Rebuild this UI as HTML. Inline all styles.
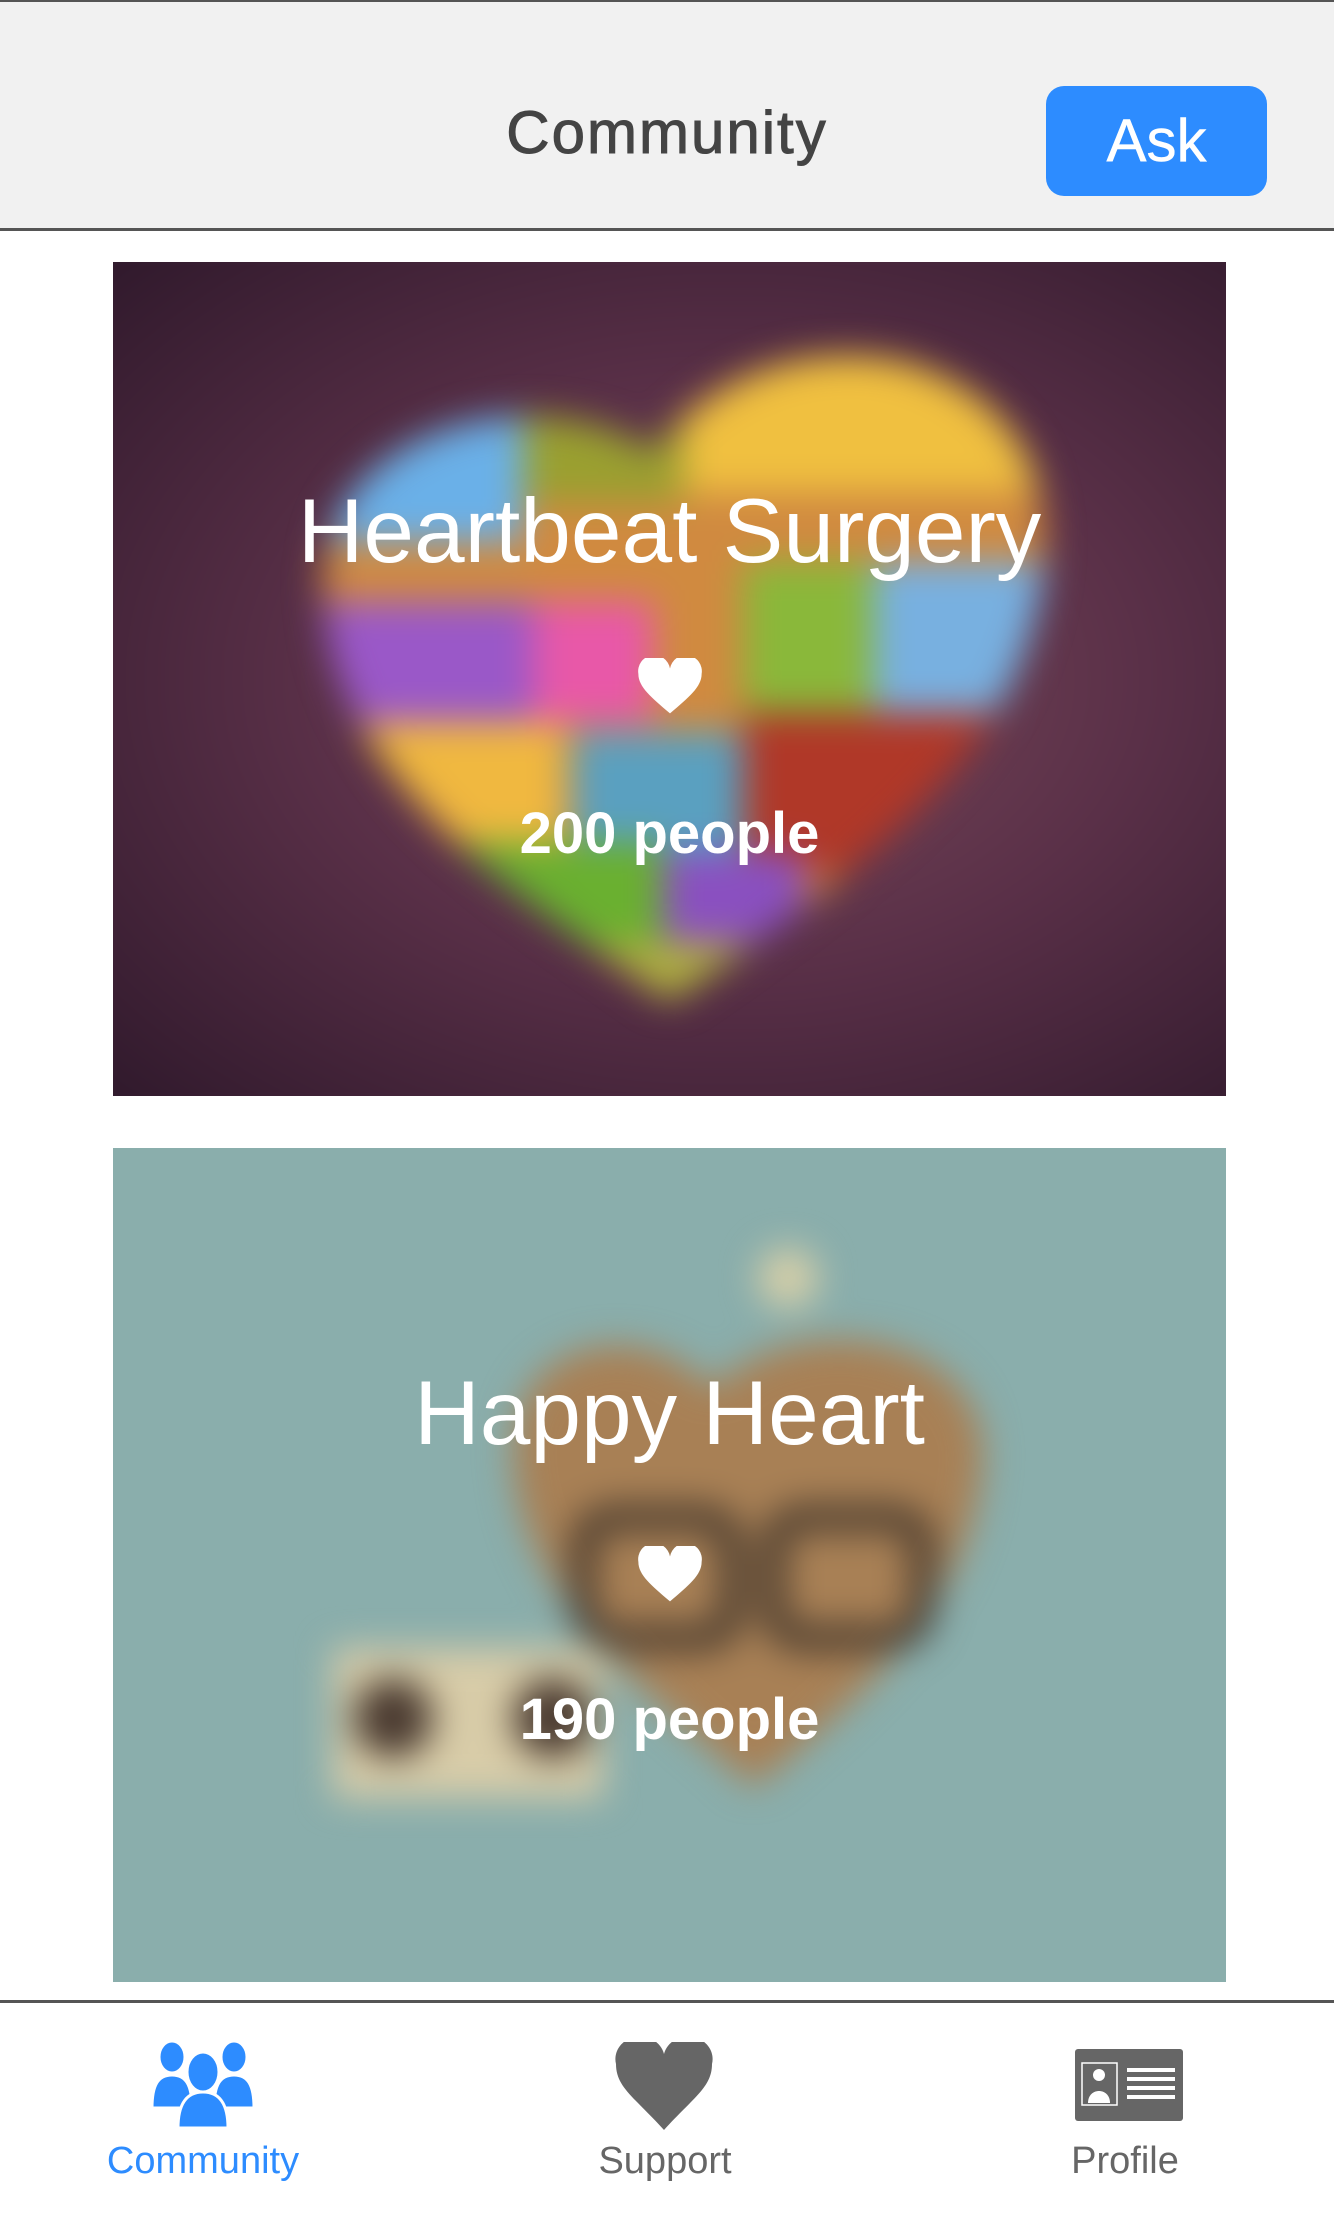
<!DOCTYPE html>
<html><head><meta charset="utf-8"><style>
*{margin:0;padding:0;box-sizing:border-box}
body{width:1334px;height:2223px;background:#fff;font-family:"Liberation Sans",sans-serif;position:relative;overflow:hidden}
.hdr{position:absolute;left:0;top:0;width:1334px;height:231px;background:#f1f1f1;border-top:2px solid #555;border-bottom:3px solid #555}
.title{position:absolute;left:0;width:1334px;top:98px;text-align:center;font-size:60px;color:#444;letter-spacing:2px;-webkit-text-stroke:1px #444}
.ask{position:absolute;left:1046px;top:86px;width:221px;height:110px;background:#2d8cff;border-radius:18px;color:#fff;font-size:60px;text-align:center;line-height:110px;-webkit-text-stroke:0.5px #fff}
.card{position:absolute;left:113px;width:1113px;height:834px;overflow:hidden}
.bg{position:absolute;inset:-40px;filter:blur(18px)}
.ct{position:absolute;left:0;width:100%;text-align:center;color:#fff}
.big{font-size:91px}
.ppl{font-size:58px;font-weight:bold}
.tab{position:absolute;top:2000px;left:0;width:1334px;height:223px;border-top:3px solid #555;background:#fff}
.lbl{position:absolute;top:2140px;font-size:38px;color:#666;text-align:center;width:300px}
</style></head><body>
<div class="hdr"></div>
<div class="title">Community</div>
<div class="ask">Ask</div>

<div class="card" style="top:262px">
 <div class="bg" style="background:radial-gradient(ellipse at 55% 50%,#7a4a5a 0%,#5a3048 45%,#2a1628 100%)"></div>
 <svg class="bg" viewBox="0 0 1113 834" style="inset:0;width:1113px;height:834px" preserveAspectRatio="none">
  <defs><clipPath id="h"><path d="M556 740 C420 640 210 520 210 320 C210 170 420 110 540 190 C600 110 700 80 790 100 C930 140 950 260 920 360 C880 520 700 640 556 740Z"/></clipPath></defs>
  <g clip-path="url(#h)">
  <rect width="1113" height="834" fill="#d08a40"/>
  <rect x="200" y="80" width="210" height="200" fill="#6ab0e8"/>
  <rect x="410" y="80" width="160" height="160" fill="#9aa030"/>
  <rect x="570" y="80" width="360" height="150" fill="#f0c040"/>
  <rect x="200" y="340" width="220" height="130" fill="#9a58c8"/>
  <rect x="420" y="340" width="120" height="120" fill="#e858a8"/>
  <rect x="630" y="300" width="130" height="160" fill="#8ab83a"/>
  <rect x="760" y="300" width="180" height="170" fill="#78b0e0"/>
  <rect x="200" y="460" width="250" height="120" fill="#f0b840"/>
  <rect x="460" y="470" width="170" height="130" fill="#5aa0c0"/>
  <rect x="630" y="450" width="260" height="160" fill="#b03828"/>
  <rect x="300" y="580" width="250" height="120" fill="#6ab030"/>
  <rect x="550" y="590" width="140" height="110" fill="#8a50c0"/>
  <rect x="400" y="680" width="240" height="80" fill="#b0b040"/>
  </g>
 </svg>
 <div class="ct big" style="top:218px">Heartbeat Surgery</div>
 <div class="ct" style="top:396px"><svg width="64" height="58" viewBox="0 0 24 22"><path d="M12 21 C5 15 0 11 0 6 A6 6 0 0 1 12 4 A6 6 0 0 1 24 6 C24 11 19 15 12 21Z" fill="#fff"/></svg></div>
 <div class="ct ppl" style="top:538px">200 people</div>
</div>

<div class="card" style="top:1148px;background:#8aaeac">
 <svg class="bg" viewBox="0 0 1113 834" style="inset:0;width:1113px;height:834px" preserveAspectRatio="none">
  <path d="M640 640 C560 560 400 460 400 300 C400 200 520 160 600 240 C680 160 860 180 870 300 C870 440 760 540 640 640Z" fill="#a88055"/>
  <rect x="470" y="370" width="150" height="120" rx="30" fill="none" stroke="#3a3028" stroke-width="22"/>
  <rect x="660" y="370" width="150" height="120" rx="30" fill="none" stroke="#3a3028" stroke-width="22"/>
  <rect x="220" y="500" width="270" height="150" fill="#d8cca8"/>
  <circle cx="280" cy="570" r="40" fill="#4a3a30"/><circle cx="440" cy="570" r="40" fill="#4a3a30"/>
  <circle cx="675" cy="130" r="30" fill="#d8d0a8"/>
 </svg>
 <div class="ct big" style="top:214px">Happy Heart</div>
 <div class="ct" style="top:398px"><svg width="64" height="58" viewBox="0 0 24 22"><path d="M12 21 C5 15 0 11 0 6 A6 6 0 0 1 12 4 A6 6 0 0 1 24 6 C24 11 19 15 12 21Z" fill="#fff"/></svg></div>
 <div class="ct ppl" style="top:538px">190 people</div>
</div>

<div class="tab"></div>
<svg style="position:absolute;left:150px;top:2040px" width="106" height="90" viewBox="0 0 106 90">
 <g fill="#2d8cff" stroke="#fff" stroke-width="3">
  <ellipse cx="22" cy="17" rx="13" ry="16"/><path d="M2 68 C2 45 8 35 22 35 C36 35 42 45 42 68Z"/>
  <ellipse cx="84" cy="17" rx="13" ry="16"/><path d="M64 68 C64 45 70 35 84 35 C98 35 104 45 104 68Z"/>
  <ellipse cx="53" cy="32" rx="16" ry="20"/><path d="M28 88 C28 62 38 52 53 52 C68 52 78 62 78 88Z"/>
 </g>
</svg>
<svg style="position:absolute;left:614px;top:2042px" width="100" height="90" viewBox="0 0 100 90">
 <path d="M50 88 C20 55 2 45 2 22 A24 22 0 0 1 50 12 A24 22 0 0 1 98 22 C98 45 80 55 50 88Z" fill="#666"/>
</svg>
<svg style="position:absolute;left:1075px;top:2049px" width="108" height="72" viewBox="0 0 108 72">
 <rect width="108" height="72" rx="3" fill="#666"/>
 <rect x="7" y="14" width="35" height="42" fill="none" stroke="#fff" stroke-width="1.5"/>
 <circle cx="24" cy="26" r="6" fill="#fff"/><path d="M13 54 C13 38 35 38 35 54Z" fill="#fff"/>
 <g fill="#fff"><rect x="52" y="19" width="48" height="4"/><rect x="52" y="28" width="48" height="4"/><rect x="52" y="37" width="48" height="4"/><rect x="52" y="46" width="48" height="4"/></g>
</svg>
<div class="lbl" style="left:53px;color:#2d8cff">Community</div>
<div class="lbl" style="left:515px">Support</div>
<div class="lbl" style="left:975px">Profile</div>
</body></html>
